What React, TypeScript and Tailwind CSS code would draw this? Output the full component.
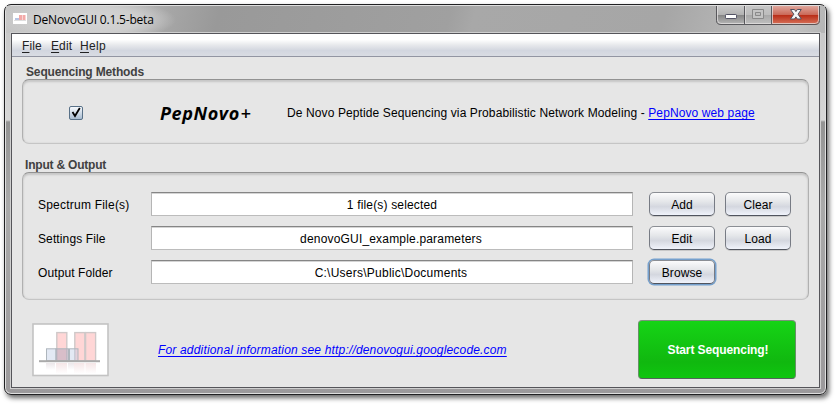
import React from "react";

const field =
  "h-6 w-[482px] border border-t-[#858585] border-x-[#b5b5b5] border-b-[#bcbcbc] bg-white text-center leading-[25px] shadow-[inset_0_1px_0_#d4d4d4]";
const button =
  "h-6 w-[66px] rounded-[5px] border border-t-[#8b8e94] border-x-[#777b84] border-b-[#50545e] bg-[linear-gradient(#fbfbfc,#e4e6e9_40%,#d4d7df_62%,#f0f3fb)] text-center leading-[24px] tracking-[0.1px] shadow-[0_1px_0_#c8c8c8]";
const panel =
  "rounded-[7px] border border-t-[#929292] border-x-[#b0b0b0] border-b-[#c5c5c5] bg-[#e6e6e6] shadow-[inset_0_2px_2px_#c7c7c7,inset_0_0_2px_#cccccc]";

function Row({ label, value, children, labelClass = "", valueClass = "" }: { label: string; value: string; children: React.ReactNode; labelClass?: string; valueClass?: string }) {
  return (
    <div className="flex h-[34px] items-start pl-[15px]">
      <span className={`w-[113px] leading-[27px] ${labelClass}`}>{label}</span>
      <div className={field}><span className={valueClass}>{value}</span></div>
      <div className="ml-4 flex gap-[10px]">{children}</div>
    </div>
  );
}

function Chart() {
  return (
    <svg width="77" height="54" viewBox="0 0 77 54">
      <defs>
        <linearGradient id="fade" x2="0" y2="1">
          <stop stopColor="#ece7ea" /><stop offset="1" stopColor="#fff" />
        </linearGradient>
        <linearGradient id="fadePink" x2="0" y2="1">
          <stop stopColor="#f5e6e7" /><stop offset="1" stopColor="#fff" />
        </linearGradient>
      </defs>
      <rect x="1" y="1" width="75" height="51.5" fill="#fff" stroke="#c3c3c3" strokeWidth="1.6" />
      <g fill="#ffd6d6" stroke="#cfc8c8" strokeWidth="1.4">
        <rect x="24.8" y="9.6" width="10" height="28.4" />
        <rect x="42.8" y="9.6" width="10" height="28.4" />
        <rect x="53.6" y="9.6" width="10" height="28.4" />
      </g>
      <g stroke="#aeb6bd" fill="#b9c8e4" fillOpacity=".4">
        <rect x="14.5" y="25.8" width="9.5" height="12" />
        <rect x="24" y="25.8" width="12.5" height="12" fill="#b2a5bb" fillOpacity=".5" />
        <rect x="37.5" y="25.8" width="8.5" height="12" />
      </g>
      <rect x="14" y="40" width="9" height="7" fill="url(#fade)" />
      <rect x="36" y="40" width="6" height="7" fill="url(#fade)" />
      <g fill="url(#fadePink)">
        <rect x="24" y="40" width="11" height="11" />
        <rect x="42" y="40" width="10.5" height="11" />
        <rect x="53.5" y="40" width="10.5" height="11" />
      </g>
      <rect x="7" y="37.2" width="61" height="2" fill="#aaa" />
    </svg>
  );
}

function WindowControls() {
  return (
    <svg width="104" height="20" viewBox="0 0 104 20" className="mr-[5px]">
      <defs>
        <linearGradient id="grey" x2="0" y2="1">
          <stop stopColor="#c9c9c9" /><stop offset=".48" stopColor="#b2b2b2" />
          <stop offset=".5" stopColor="#858585" /><stop offset="1" stopColor="#b8b8b8" />
        </linearGradient>
        <linearGradient id="dim" x2="0" y2="1">
          <stop stopColor="#c6c6c6" /><stop offset=".48" stopColor="#bcbcbc" />
          <stop offset=".5" stopColor="#a8a8a8" /><stop offset="1" stopColor="#c0c0c0" />
        </linearGradient>
        <linearGradient id="red" x2="0" y2="1">
          <stop stopColor="#dfa69c" /><stop offset=".48" stopColor="#ca6857" />
          <stop offset=".5" stopColor="#b92d17" /><stop offset="1" stopColor="#d8745c" />
        </linearGradient>
      </defs>
      <path d="M1 0V14Q1 18.5 5 18.5H29V0Z" fill="url(#grey)" />
      <path d="M29 0H56V18.5H29Z" fill="url(#dim)" />
      <path d="M56 0H103V14Q103 18.5 99 18.5H56Z" fill="url(#red)" />
      <path d="M1.5 0V14Q1.5 17.5 5 17.5H99Q102.5 17.5 102.5 14V0M29.5 0V17M56.5 0V17" fill="none" stroke="#e4e2e2" strokeOpacity=".75" />
      <path d="M.5 0V14.5Q.5 18.5 5 18.5H99Q103.5 18.5 103.5 14.5V0M28.5 0V18M55.5 0V18" fill="none" stroke="#424247" strokeOpacity=".8" />
      <rect x="9.5" y="8.5" width="11" height="4" rx=".7" fill="#fff" stroke="#535365" />
      <path d="M36.5 3.5H47.5V12.5H36.5ZM39.5 6.5V9.5H44.5V6.5Z" fill="#c4c4c4" fillRule="evenodd" stroke="#898989" />
      <path d="M74.5 3.5H78.5L79.9 5.6 81.3 3.5H85.3L82 8.2 85.3 13H81.3L79.9 10.9 78.5 13H74.5L77.8 8.2Z" fill="#f6f6f7" stroke="#50505e" />
    </svg>
  );
}

export default function App() {
  return (
    <div className="h-[405px] w-[837px] overflow-hidden bg-white pl-1 pt-1 font-['Liberation_Sans',Arial,sans-serif] text-[12px] text-black">
      <div className="flex h-[391px] w-[823px] flex-col rounded-[7px] border border-[#202022] bg-[linear-gradient(#c4c4c4,#d6d6d6_115px,#939393_117px,#aaa_200px,#9b999b)] px-[6px] shadow-[inset_0_0_0_1px_#dedede,2px_3px_5px_rgba(0,0,0,.6)]">
        <header className="-mx-[5px] mt-px flex h-[27px] justify-between bg-[radial-gradient(ellipse_90px_22px_at_80px_14px,#d6d6d6,#cecece_60%,transparent),linear-gradient(105deg,#c5c5c5,#bebebe_13%,#a6a6a6_20%,#999_26%,#a0a0a0_54%,#a8a8a8_57%,#a6a6a6_80%,#c2c2c2_96%,#b5b5b5)]">
          <div className="flex pl-[7px] pt-[6px]">
            <svg width="14" height="12" viewBox="0 0 14 12" className="mt-px">
              <rect width="14" height="11" fill="#fff" />
              <path d="M6 2H9V7H6ZM9.5 2H12.5V7H9.5Z" fill="#f3aaa9" />
              <path d="M2 5H6V7H2Z" fill="#b6c4e2" /><path d="M1 7.5H13" stroke="#dedede" />
            </svg>
            <span className="ml-[6px] h-4 whitespace-nowrap font-['Open_Sans','Noto_Sans',sans-serif] text-[12px] leading-4 tracking-[-0.2px]">DeNovoGUI 0.1.5-beta</span>
          </div>
          <WindowControls />
        </header>
        <main className="h-[355px] w-[809px] border border-[#55555a] bg-[#e6e6e6] shadow-[0_0_0_1px_#cfcfcf]">
          <nav className="flex h-[23px] border-b border-[#9295a2] bg-[linear-gradient(#fff_25%,#e7e9ec_50%,#d2d6df_75%,#d9dce3)] pl-[10px] leading-6 text-[#222]">
            <span className="w-[29px] tracking-[0.1px]"><u className="underline-offset-2">F</u>ile</span>
            <span className="w-[29px] tracking-[0.1px]"><u className="underline-offset-2">E</u>dit</span>
            <span className="tracking-[0.3px]"><u className="underline-offset-2">H</u>elp</span>
          </nav>
          <h2 className="h-[22px] pl-[14px] font-bold leading-[30px] tracking-[-0.15px] text-[#414141]">Sequencing Methods</h2>
          <section className={`${panel} ml-[10px] flex h-[65px] w-[787px] items-center pt-[3px]`}>
            <svg width="15" height="15" viewBox="0 0 15 15" className="mb-px ml-[45px]">
              <defs><linearGradient id="check" x2="0" y2="1"><stop stopColor="#fafcff" /><stop offset="1" stopColor="#a5b9ce" /></linearGradient></defs>
              <rect x="1.5" y="1.5" width="13" height="13" rx="1.5" fill="url(#check)" stroke="#587087" />
              <path d="M4.5 7L7 11 11.8 3" fill="none" stroke="#000" strokeWidth="1.8" />
            </svg>
            <span className="ml-[77px] w-[127px] whitespace-nowrap font-['Open_Sans','Noto_Sans',sans-serif] text-[18px] font-bold italic tracking-[0.6px]">PepNovo<span className="ml-px font-semibold not-italic">+</span></span>
            <span className="whitespace-nowrap tracking-[0.11px]">De Novo Peptide Sequencing via Probabilistic Network Modeling - <a className="text-[#0000ff] underline underline-offset-2">PepNovo web page</a></span>
          </section>
          <h2 className="h-7 pl-[13px] font-bold leading-[42px] tracking-[-0.2px] text-[#414141]">Input &amp; Output</h2>
          <section className={`${panel} ml-[10px] h-[128px] w-[787px] pt-[19px]`}>
            <Row label="Spectrum File(s)" labelClass="tracking-[0.22px]" value="1 file(s) selected" valueClass="tracking-[0.17px]"><div className={button}>Add</div><div className={button}>Clear</div></Row>
            <Row label="Settings File" labelClass="tracking-[0.12px]" value="denovoGUI_example.parameters" valueClass="mr-[2px] tracking-[0.18px]"><div className={button}>Edit</div><div className={button}>Load</div></Row>
            <Row label="Output Folder" labelClass="tracking-[0.1px]" value="C:\Users\Public\Documents" valueClass="mr-[2px] tracking-[0.24px]"><div className={`${button} ring-[1.5px] ring-[#75a0cd]`}>Browse</div></Row>
          </section>
          <footer className="flex h-[87px] pl-5 pt-[20px]">
            <div className="mt-[3px] h-[54px] w-[77px]"><Chart /></div>
            <a className="ml-[49px] mt-[22px] w-[480px] whitespace-nowrap italic leading-4 tracking-[0.17px] text-[#0000ff] underline underline-offset-2">For additional information see http://denovogui.googlecode.com</a>
            <div className="h-[59px] w-[158px] rounded-[4px] border border-t-[#7b917b] border-x-[#679067] border-b-[#54645a] bg-[linear-gradient(#16d416,#10b80f_72%,#0fc60f)] pl-[2px] text-center font-bold leading-[58px] tracking-[-0.1px] text-white">Start Sequencing!</div>
          </footer>
        </main>
      </div>
    </div>
  );
}
